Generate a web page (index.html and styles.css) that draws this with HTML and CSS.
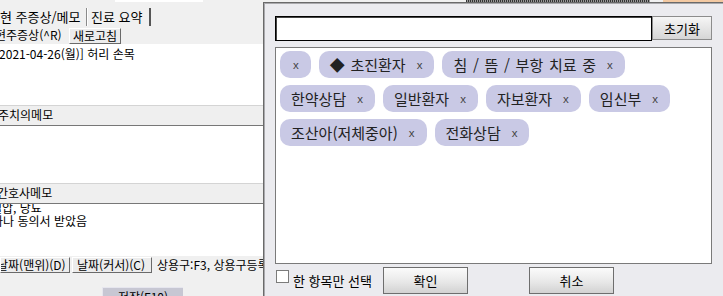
FILE: index.html
```html
<!DOCTYPE html>
<html lang="ko">
<head>
<meta charset="utf-8">
<title>태그 선택</title>
<link rel="stylesheet" href="styles.css">
</head>
<body>
<div class="app">
  <div class="topstrip"><span class="ts-white"></span><span class="ts-dots"></span><span class="ts-peach"></span></div>
  <div class="tabs">
    <span class="tab tab-main">현 주증상/메모</span>
    <span class="tab tab-second">진료 요약</span>
  </div>
  <div class="toolrow">
    <span class="toollbl">현주증상(^R)</span>
    <span class="btn3d">새로고침</span>
  </div>
  <div class="memo memo1"><div class="line cut5">[2021-04-26(월)] 허리 손목</div></div>
  <div class="bar"><span class="cut2">주치의메모</span></div>
  <div class="memo memo2"></div>
  <div class="bar"><span class="cut3">간호사메모</span></div>
  <div class="memo memo3">
    <div class="line first cut9">혈압, 당뇨</div>
    <div class="line cut8">사나 동의서 받았음</div>
  </div>
  <div class="btnrow">
    <span class="btn3d b-first">날짜(맨위)(D)</span>
    <span class="btn3d b-second">날짜(커서)(C)</span>
    <span class="hint">상용구:F3, 상용구등록</span>
  </div>
  <div class="saverow"><span class="savebtn">저장(F10)</span></div>
</div>

<div class="dialog">
  <div class="searchrow">
    <div class="search"></div>
    <div class="resetbtn">초기화</div>
  </div>
  <div class="tagbox">
    <span class="tag"><span class="lbl"></span><span class="x">x</span></span>
    <span class="tag"><span class="lbl">◆ 초진환자</span><span class="x">x</span></span>
    <span class="tag"><span class="lbl">침 / 뜸 / 부항 치료 중</span><span class="x">x</span></span>
    <span class="tag"><span class="lbl">한약상담</span><span class="x">x</span></span>
    <span class="tag"><span class="lbl">일반환자</span><span class="x">x</span></span>
    <span class="tag"><span class="lbl">자보환자</span><span class="x">x</span></span>
    <span class="tag"><span class="lbl">임신부</span><span class="x">x</span></span>
    <span class="tag"><span class="lbl">조산아(저체중아)</span><span class="x">x</span></span>
    <span class="tag"><span class="lbl">전화상담</span><span class="x">x</span></span>
  </div>
  <div class="footer">
    <span class="chk"></span>
    <span class="chklbl">한 항목만 선택</span>
    <span class="dbtn ok">확인</span>
    <span class="dbtn cancel">취소</span>
  </div>
</div>
</body>
</html>
```

FILE: styles.css
```css
* { box-sizing: border-box; margin: 0; padding: 0; }
html, body { width: 723px; height: 296px; overflow: hidden; }
body {
  position: relative;
  background: #f0f0f0;
  font-family: "Noto Sans CJK KR", "Noto Sans", sans-serif;
  color: #000;
}

/* ---------- background application ---------- */
.app {
  width: 723px;
  height: 296px;
  display: flex;
  flex-direction: column;
  overflow: hidden;
  font-size: 12px;
}
.topstrip { height: 8px; flex: none; display: flex; align-items: flex-start; }
.ts-white { margin-left: 115px; width: 88px; height: 2px; background: #fff; }
.ts-dots { margin-left: 263px; width: 184px; height: 2px; background: repeating-linear-gradient(90deg, #333 0 1px, #9a9a9a 1px 2px); }
.ts-peach { margin-left: 13px; width: 60px; height: 2px; background: #f3c9a2; }

.tabs { height: 18px; flex: none; display: flex; font-size: 13px; line-height: 17px; }
.tab { display: block; height: 18px; white-space: nowrap; }
.tab-main { width: 87px; border-right: 1px solid #8a8a8a; box-shadow: 1px 0 0 #fff; }
.tab-second { width: 64px; padding-left: 4px; border-right: 2px solid #555; }

.toolrow { height: 18px; flex: none; display: flex; align-items: flex-start; line-height: 18px; }
.toollbl { width: 69px; overflow: hidden; white-space: nowrap; text-indent: -5px; }
.btn3d {
  display: block;
  height: 16px;
  margin-top: 2px;
  padding: 0 3px;
  line-height: 14px;
  background: #ececec;
  border: 1px solid;
  border-color: #fff #6a6a6a #6a6a6a #fff;
  white-space: nowrap;
}

.memo { background: #fff; flex: none; overflow: hidden; }
.memo1 { height: 61px; padding-top: 3px; }
.memo2 { height: 57px; }
.memo3 { height: 52px; }
.line { line-height: 13px; white-space: nowrap; }
.line.first { margin-top: -3px; }
.cut5 { text-indent: -5px; }
.cut9 { text-indent: -9px; }
.cut8 { text-indent: -8px; }
.cut2 { margin-left: -2px; }
.cut3 { margin-left: -3px; }

.bar {
  height: 21px;
  flex: none;
  background: #efefef;
  border-top: 1px solid #d4d4d4;
  border-bottom: 1px solid #777;
  line-height: 18px;
  overflow: hidden;
  white-space: nowrap;
}

.btnrow { height: 18px; flex: none; display: flex; align-items: flex-start; background: #f0f0f0; }
.btnrow .btn3d { margin-top: 1px; }
.b-first { width: 70px; padding: 0; text-indent: -4px; overflow: hidden; }
.b-second { margin-left: 2px; width: 80px; padding: 0 4px; }
.hint { margin-left: 5px; line-height: 18px; white-space: nowrap; }

.saverow { flex: 1; display: flex; align-items: flex-start; }
.savebtn {
  margin-left: 102px;
  margin-top: 13px;
  width: 81px;
  height: 20px;
  background: #c7c7d3;
  border-top: 1px solid #e6e6ee;
  border-left: 1px solid #e6e6ee;
  text-align: center;
  line-height: 18px;
}

/* ---------- dialog (overlays the application) ---------- */
.dialog {
  position: absolute;
  left: 263px;
  top: 2px;
  right: 0;
  bottom: 0;
  background: #ebebef;
  border-top: 1px solid #6a6a6a;
  border-left: 1px solid #6a6a6a;
  box-shadow: inset 1px 1px 0 #a9a9ad;
  display: flex;
  flex-direction: column;
  padding: 13px 11px 2px 11px;
}

.searchrow { height: 25px; flex: none; display: flex; }
.search {
  flex: 1;
  background: #fff;
  border: 1px solid #000;
  box-shadow: inset 1px 1px 0 #444;
}
.resetbtn {
  width: 60px;
  height: 24px;
  border: 1px solid #8c8c8c;
  background: linear-gradient(#f6f6f6, #e4e4e4 55%, #d6d6d6);
  font-size: 13px;
  display: flex;
  align-items: center;
  justify-content: center;
}

.tagbox {
  margin-top: 6px;
  flex: 1;
  background: #fff;
  border: 1px solid #7a7a7a;
  padding: 3px 4px;
  display: flex;
  flex-wrap: wrap;
  align-content: flex-start;
  gap: 7px 8px;
}
.tag {
  height: 27px;
  border-radius: 10px;
  background: #c9c9e5;
  display: flex;
  align-items: center;
  padding: 0 12px 0 11px;
  font-size: 15px;
  color: #222;
  word-spacing: 1.5px;
  white-space: nowrap;
}
.tag .lbl { margin-right: 11px; }
.tag .lbl:empty { display: none; }
.tag:first-child { padding: 0 12px 0 13px; }
.tag .x {
  font-family: "Liberation Sans", sans-serif;
  font-size: 11.5px;
  color: #444;
}

.footer { margin-top: 3px; height: 27px; flex: none; display: flex; align-items: center; }
.chk {
  align-self: flex-start;
  margin-top: 3px;
  margin-left: 1px;
  width: 13px;
  height: 13px;
  background: #fff;
  border: 1px solid #7b7b7b;
}
.chklbl { margin-left: 4px; width: 79px; font-size: 13px; white-space: nowrap; overflow: visible; }
.dbtn {
  width: 85px;
  height: 27px;
  border: 1px solid #6e6e6e;
  background: linear-gradient(#fbfbfb, #e8e8e8 55%, #d2d2d2);
  font-size: 13px;
  display: flex;
  align-items: center;
  justify-content: center;
}
.ok { margin-left: 11px; }
.cancel { margin-left: 61px; }
```
